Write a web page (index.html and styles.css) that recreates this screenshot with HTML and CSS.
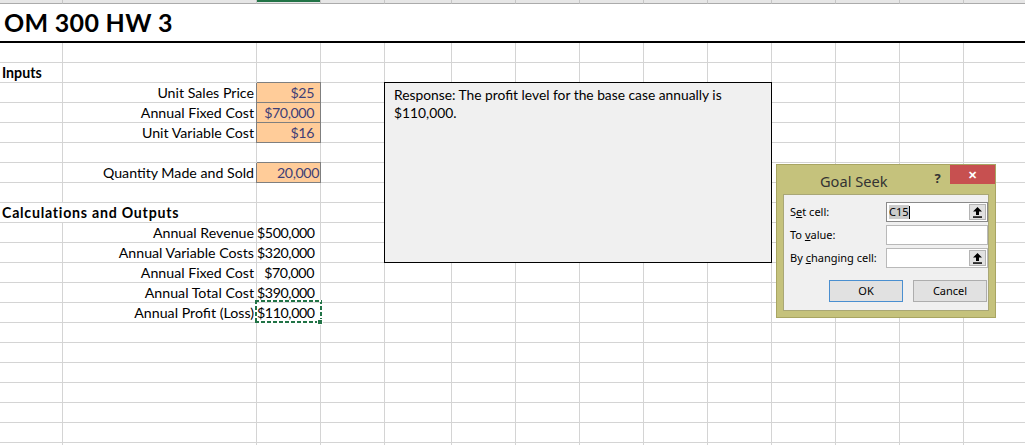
FILE: index.html
```html
<!DOCTYPE html>
<html>
<head>
<meta charset="utf-8">
<title>OM 300 HW 3</title>
<link rel="stylesheet" href="styles.css">
</head>
<body>
<div class="page">
  <div class="sheet">
    <i class="hd"></i><i class="hd"></i><i class="hd hd-sel"></i><i class="hd"></i><i class="hd"></i><i class="hd"></i><i class="hd"></i><i class="hd"></i><i class="hd"></i><i class="hd"></i><i class="hd"></i><i class="hd"></i><i class="hd"></i><i class="hd"></i>

    <div class="title">OM 300 HW 3</div>

    <i></i><i></i><i></i><i></i><i></i><i></i><i></i><i></i><i></i><i></i><i></i><i></i><i></i><i></i>

    <div class="c bold">Inputs</div><i></i><i></i><i></i><i></i><i></i><i></i><i></i><i></i><i></i><i></i><i></i><i></i><i></i>

    <i></i><div class="c lbl">Unit Sales Price</div><div class="c inp cur">$25</div><i></i><i></i><i></i><i></i><i></i><i></i><i></i><i></i><i></i><i></i><i></i>

    <i></i><div class="c lbl">Annual Fixed Cost</div><div class="c inp cur">$70,000</div><i></i><i></i><i></i><i></i><i></i><i></i><i></i><i></i><i></i><i></i><i></i>

    <i></i><div class="c lbl">Unit Variable Cost</div><div class="c inp cur">$16</div><i></i><i></i><i></i><i></i><i></i><i></i><i></i><i></i><i></i><i></i><i></i>

    <i></i><i></i><i></i><i></i><i></i><i></i><i></i><i></i><i></i><i></i><i></i><i></i><i></i><i></i>

    <i></i><div class="c lbl">Quantity Made and Sold</div><div class="c inp num">20,000</div><i></i><i></i><i></i><i></i><i></i><i></i><i></i><i></i><i></i><i></i><i></i>

    <i></i><i></i><i></i><i></i><i></i><i></i><i></i><i></i><i></i><i></i><i></i><i></i><i></i><i></i>

    <div class="c bold wide span2">Calculations and Outputs</div><i></i><i></i><i></i><i></i><i></i><i></i><i></i><i></i><i></i><i></i><i></i><i></i>

    <i></i><div class="c lbl">Annual Revenue</div><div class="c val">$500,000</div><i></i><i></i><i></i><i></i><i></i><i></i><i></i><i></i><i></i><i></i><i></i>

    <i></i><div class="c lbl">Annual Variable Costs</div><div class="c val">$320,000</div><i></i><i></i><i></i><i></i><i></i><i></i><i></i><i></i><i></i><i></i><i></i>

    <i></i><div class="c lbl">Annual Fixed Cost</div><div class="c val">$70,000</div><i></i><i></i><i></i><i></i><i></i><i></i><i></i><i></i><i></i><i></i><i></i>

    <i></i><div class="c lbl">Annual Total Cost</div><div class="c val">$390,000</div><i></i><i></i><i></i><i></i><i></i><i></i><i></i><i></i><i></i><i></i><i></i>

    <i></i><div class="c lbl">Annual Profit (Loss)</div><div class="c val sel">$110,000</div><i></i><i></i><i></i><i></i><i></i><i></i><i></i><i></i><i></i><i></i><i></i>

    <i></i><i></i><i></i><i></i><i></i><i></i><i></i><i></i><i></i><i></i><i></i><i></i><i></i><i></i>
    <i></i><i></i><i></i><i></i><i></i><i></i><i></i><i></i><i></i><i></i><i></i><i></i><i></i><i></i>
    <i></i><i></i><i></i><i></i><i></i><i></i><i></i><i></i><i></i><i></i><i></i><i></i><i></i><i></i>
    <i></i><i></i><i></i><i></i><i></i><i></i><i></i><i></i><i></i><i></i><i></i><i></i><i></i><i></i>
    <i></i><i></i><i></i><i></i><i></i><i></i><i></i><i></i><i></i><i></i><i></i><i></i><i></i><i></i>
    <i></i><i></i><i></i><i></i><i></i><i></i><i></i><i></i><i></i><i></i><i></i><i></i><i></i><i></i>
    <i></i><i></i><i></i><i></i><i></i><i></i><i></i><i></i><i></i><i></i><i></i><i></i><i></i><i></i>
  </div>

  <div class="textbox">Response: The profit level for the base case annually is<br>$110,000.</div>

  <div class="dialog">
    <div class="dlg-title">
      <span class="dlg-name">Goal Seek</span>
      <span class="dlg-help">?</span>
      <span class="dlg-close">&#x2715;</span>
    </div>
    <div class="dlg-body">
      <div class="field-grid">
        <span class="flabel">S<u>e</u>t cell:</span>
        <div class="fbox focus"><span class="ftext"><span class="hl">C15</span><span class="caret"></span></span><span class="refbtn"><svg width="9" height="11" viewBox="0 0 9 11"><path d="M4.5 0 L9 4.6 L6 4.6 L6 8 L3 8 L3 4.6 L0 4.6 Z" fill="#000"/><rect x="0" y="9.3" width="9" height="1.5" fill="#000"/></svg></span></div>
        <span class="flabel">To <u>v</u>alue:</span>
        <div class="fbox"><span class="ftext"></span></div>
        <span class="flabel">By <u>c</u>hanging cell:</span>
        <div class="fbox"><span class="ftext"></span><span class="refbtn"><svg width="9" height="11" viewBox="0 0 9 11"><path d="M4.5 0 L9 4.6 L6 4.6 L6 8 L3 8 L3 4.6 L0 4.6 Z" fill="#000"/><rect x="0" y="9.3" width="9" height="1.5" fill="#000"/></svg></span></div>
      </div>
      <div class="btn-row">
        <span class="btn default">OK</span>
        <span class="btn">Cancel</span>
      </div>
    </div>
  </div>
</div>
</body>
</html>
```

FILE: styles.css
```css
html, body {
  margin: 0;
  padding: 0;
  background: #ffffff;
}

body {
  font-family: Lato, "Liberation Sans", sans-serif;
  overflow: hidden;
}

.page {
  position: relative;
  width: 1025px;
  height: 445px;
  overflow: hidden;
}

/* ---------- spreadsheet grid ---------- */
.sheet {
  display: grid;
  grid-template-columns: 63px 194px 64px 64px 67px repeat(9, 64px);
  grid-template-rows: 4px 39px repeat(21, 20px);
  width: 1029px;
}

.sheet > i,
.sheet > .c {
  display: block;
  box-sizing: border-box;
  border-right: 1px solid #d4d4d4;
  border-bottom: 1px solid #d4d4d4;
  min-width: 0;
}

.sheet > i.hd {
  background: #e6e6e6;
  border-right: 1px solid #c6c6c6;
  border-bottom: 1px solid #ababab;
}

.sheet > i.hd-sel {
  background: linear-gradient(#217346 0 2px, #e6e6e6 2px);
}

.title {
  grid-column: 1 / -1;
  box-sizing: border-box;
  border-bottom: 2px solid #000;
  font-weight: 700;
  font-size: 25px;
  line-height: 37px;
  padding-left: 4px;
  color: #000;
  letter-spacing: 0.3px;
}

.c {
  font-size: 14.2px;
  line-height: 19px;
  color: #000;
  white-space: nowrap;
  overflow: visible;
}

.bold {
  font-weight: 700;
  padding-left: 2px;
}

.wide {
  letter-spacing: 0.75px;
}

.span2 {
  grid-column: span 2;
}

.lbl {
  text-align: right;
  padding-right: 2px;
}

.val {
  text-align: right;
  padding-right: 6px;
  letter-spacing: -0.4px;
}

.inp {
  background: #ffcc99;
  color: #3f3f76;
  text-align: right;
  letter-spacing: -0.4px;
  border-right-color: #7f7f7f !important;
  border-bottom-color: #7f7f7f !important;
  box-shadow: 0 -1px 0 #7f7f7f, -1px 0 0 #7f7f7f;
}

.inp.cur {
  padding-right: 6px;
}

.inp.num {
  padding-right: 1px;
}

.sel {
  position: relative;
}

.sel::after {
  content: "";
  position: absolute;
  left: -2px;
  top: -3px;
  width: 67px;
  height: 23px;
  background:
    repeating-linear-gradient(90deg, #217346 0 4px, #ffffff 4px 6px) left top / 100% 2px no-repeat,
    repeating-linear-gradient(90deg, #217346 0 4px, #ffffff 4px 6px) left bottom / 100% 2px no-repeat,
    repeating-linear-gradient(180deg, #217346 0 4px, #ffffff 4px 6px) left top / 2px 100% no-repeat,
    repeating-linear-gradient(180deg, #217346 0 4px, #ffffff 4px 6px) right top / 2px 100% no-repeat;
}

.sel::before {
  content: "";
  position: absolute;
  right: -3px;
  bottom: -3px;
  width: 4px;
  height: 4px;
  background: #217346;
  border: 1px solid #ffffff;
  z-index: 2;
}

/* ---------- text box ---------- */
.textbox {
  position: absolute;
  left: 384px;
  top: 82px;
  width: 388px;
  height: 181px;
  box-sizing: border-box;
  border: 1px solid #000;
  background: #f0f0f0;
  padding: 3px 9px;
  font-size: 13.8px;
  line-height: 17.5px;
  color: #000;
}

/* ---------- Goal Seek dialog ---------- */
.dialog {
  position: absolute;
  left: 776px;
  top: 164px;
  width: 220px;
  height: 154px;
  box-sizing: border-box;
  background: #c5c27c;
  border: 1px solid #a8a562;
  padding: 0 6px 6px 6px;
  display: flex;
  flex-direction: column;
  font-family: "Noto Sans", "Open Sans", sans-serif;
}

.dlg-title {
  height: 29px;
  display: flex;
  align-items: flex-start;
  position: relative;
}

.dlg-name {
  margin-left: 37px;
  margin-top: 6px;
  font-size: 14.6px;
  line-height: 20px;
  color: #333333;
}

.dlg-help {
  margin-left: 47px;
  margin-top: 5px;
  font-size: 13px;
  font-weight: 700;
  line-height: 16px;
  color: #333333;
}

.dlg-close {
  margin-left: auto;
  margin-right: -6px;
  width: 45px;
  height: 19px;
  background: #c75050;
  color: #ffffff;
  font-size: 11px;
  font-weight: 700;
  line-height: 19px;
  text-align: center;
}

.dlg-body {
  flex: 1;
  background: #f0f0f0;
  border: 1px solid #a9a776;
  padding: 7px 1px 0 6px;
  display: flex;
  flex-direction: column;
}

.field-grid {
  display: grid;
  grid-template-columns: 96px 102px;
  grid-auto-rows: 20px;
  row-gap: 3px;
  align-items: center;
}

.flabel {
  font-size: 11px;
  color: #000;
  line-height: 14px;
}

.fbox {
  height: 20px;
  box-sizing: border-box;
  border: 1px solid #b9b9b9;
  background: #ffffff;
  display: flex;
  align-items: stretch;
}

.fbox.focus {
  border-color: #8a8a8a;
}

.ftext {
  flex: 1;
  display: flex;
  align-items: center;
  padding-left: 2px;
  font-size: 11px;
  color: #000;
}

.hl {
  background: #cccccc;
  line-height: 14px;
}

.caret {
  display: inline-block;
  width: 1px;
  height: 13px;
  background: #000;
}

.refbtn {
  width: 17px;
  margin: 1px;
  box-sizing: border-box;
  background: #e1e1e1;
  border: 1px solid #b4b4b4;
  display: flex;
  align-items: center;
  justify-content: center;
}

.btn-row {
  display: flex;
  gap: 10px;
  margin-top: 12px;
  padding-left: 39px;
}

.btn {
  width: 74px;
  height: 22px;
  box-sizing: border-box;
  border: 1px solid #adadad;
  background: #e1e1e1;
  font-size: 11px;
  line-height: 20px;
  text-align: center;
  color: #000;
}

.btn.default {
  border-color: #4a8fd0;
}
```
